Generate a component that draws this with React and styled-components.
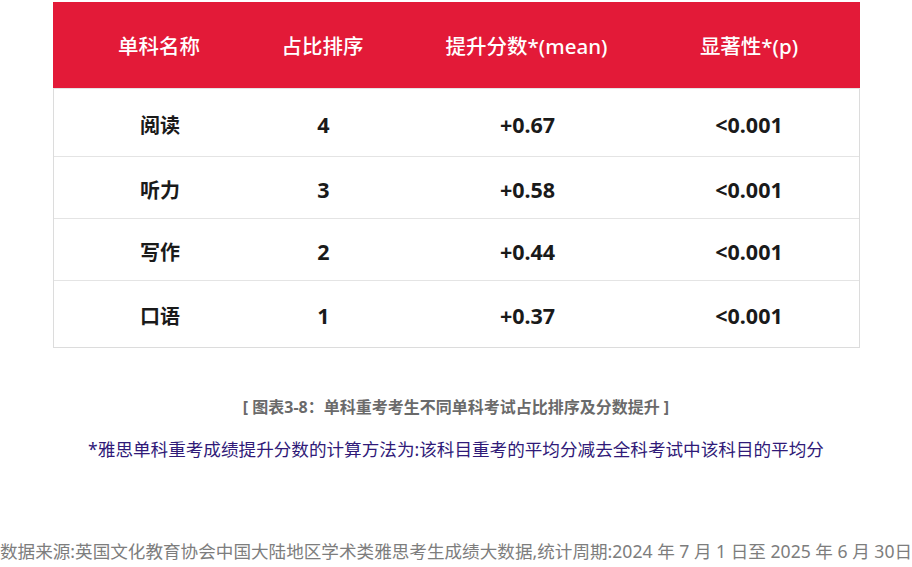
import React from "react";
import styled, { createGlobalStyle } from "styled-components";

const GlobalStyle = createGlobalStyle`
  body {
    margin: 0;
    background: #ffffff;
    font-family: "Noto Sans", "Noto Sans CJK SC", sans-serif;
  }
`;

const Page = styled.div`
  width: 912px;
  height: 567px;
  overflow: hidden;
  display: flex;
  flex-direction: column;
  align-items: center;
  padding-top: 2px;
  box-sizing: border-box;
`;

const Table = styled.div`
  width: 807px;
  border: 1px solid #dcdcdc;
  border-top: none;
  box-sizing: border-box;
`;

const Row = styled.div`
  display: grid;
  grid-template-columns: 213px 114px 294px 1fr;
  align-items: center;
  box-sizing: border-box;
  height: ${(p) => p.$h}px;
  padding-top: ${(p) => (p.$head ? "0" : "3px")};
  background: ${(p) => (p.$head ? "#e31a38" : "#ffffff")};
  color: ${(p) => (p.$head ? "#ffffff" : "#1a1a1a")};
  font-size: ${(p) => (p.$head ? "20.5px" : "20px")};
  font-weight: ${(p) => (p.$head ? 500 : 700)};
  border-bottom: ${(p) => (p.$last ? "none" : "1px solid #e4e4e4")};
  margin: ${(p) => (p.$head ? "0 -1px" : "0")};
`;

const Cell = styled.div`
  text-align: center;
  white-space: nowrap;
  font-size: ${(p) => (p.$num ? "21.5px" : "inherit")};
  &:last-child {
    padding-right: 35px;
  }
`;

const Caption = styled.div`
  margin-top: 46px;
  font-size: 16px;
  font-weight: 700;
  color: #6a6a6a;
`;

const Note = styled.div`
  margin-top: 18px;
  font-size: 17.6px;
  color: #301a78;
`;

const Source = styled.div`
  margin-top: 77px;
  width: 912px;
  display: flex;
  justify-content: center;
  white-space: nowrap;
  font-size: 17.6px;
  color: #7d7d7d;
`;

const rows = [
  { name: "阅读", rank: "4", mean: "+0.67", p: "<0.001", h: 68 },
  { name: "听力", rank: "3", mean: "+0.58", p: "<0.001", h: 62 },
  { name: "写作", rank: "2", mean: "+0.44", p: "<0.001", h: 62 },
  { name: "口语", rank: "1", mean: "+0.37", p: "<0.001", h: 66 },
];

export default function App() {
  return (
    <>
      <GlobalStyle />
      <Page>
        <Table>
          <Row $head $h={87}>
            <Cell>单科名称</Cell>
            <Cell>占比排序</Cell>
            <Cell>提升分数*(mean)</Cell>
            <Cell>显著性*(p)</Cell>
          </Row>
          {rows.map((r, i) => (
            <Row key={r.name} $h={r.h} $last={i === rows.length - 1}>
              <Cell>{r.name}</Cell>
              <Cell $num>{r.rank}</Cell>
              <Cell $num>{r.mean}</Cell>
              <Cell $num>{r.p}</Cell>
            </Row>
          ))}
        </Table>
        <Caption>[ 图表3-8：单科重考考生不同单科考试占比排序及分数提升 ]</Caption>
        <Note>*雅思单科重考成绩提升分数的计算方法为:该科目重考的平均分减去全科考试中该科目的平均分</Note>
        <Source>
          <span>数据来源:英国文化教育协会中国大陆地区学术类雅思考生成绩大数据,统计周期:2024 年 7 月 1 日至 2025 年 6 月 30日</span>
        </Source>
      </Page>
    </>
  );
}
